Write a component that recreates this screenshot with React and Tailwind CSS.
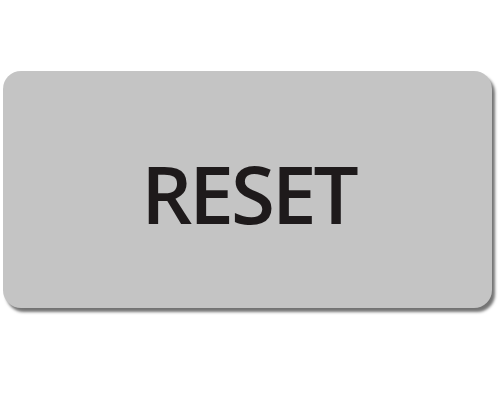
export default function App() {
  return (
    <div className="w-[500px] h-[400px] bg-white pt-[71px] pl-[3px]">
      <div className="w-[489px] h-[237px] rounded-[18px] bg-[#c4c4c4] shadow-[3px_4px_3px_rgba(0,0,0,0.55)] flex items-center justify-center">
        <span
          className="text-[80px] font-semibold text-[#1e1a1b] tracking-[-3px] leading-none mt-[7px] ml-[2px]"
          style={{ fontFamily: '"Open Sans", sans-serif' }}
        >
          RESET
        </span>
      </div>
    </div>
  );
}
